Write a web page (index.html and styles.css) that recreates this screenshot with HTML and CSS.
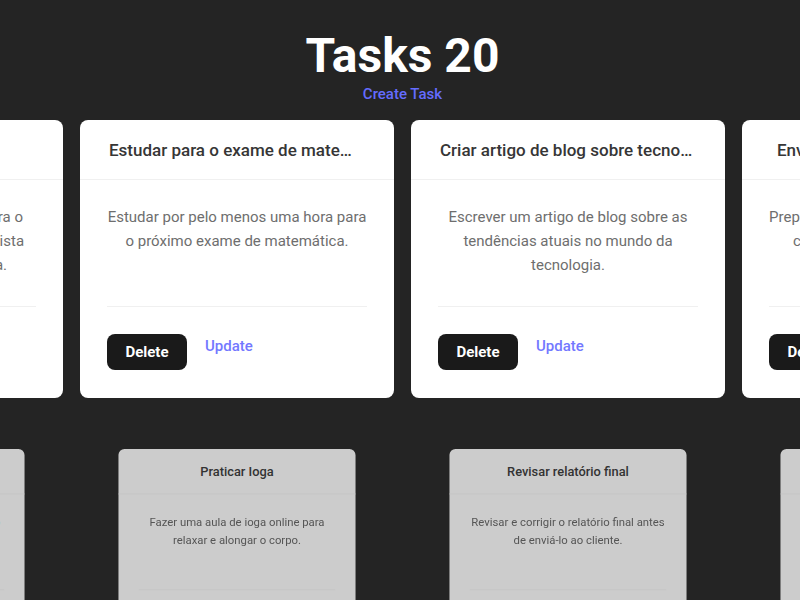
FILE: index.html
```html
<!DOCTYPE html>
<html lang="pt">
<head>
<meta charset="utf-8">
<title>Tasks</title>
<link rel="stylesheet" href="styles.css">
</head>
<body>
<main class="page">
  <header class="hero">
    <h1 class="hero-title">Tasks 20</h1>
    <a class="create-link" href="#">Create Task</a>
  </header>
  <section class="viewport">
    <div class="track">
      <article class="card">
        <div class="card-head"><span class="card-title">Fazer compras</span></div>
        <div class="card-body">
          <p class="card-desc">Ir ao mercado comprar itens para o jantar de domingo, conforme a lista elaborada junto com a família.</p>
          <div class="card-actions">
            <button class="btn-delete">Delete</button>
            <a class="link-update" href="#">Update</a>
          </div>
        </div>
      </article>
      <article class="card">
        <div class="card-head"><span class="card-title">Estudar para o exame de matemática</span></div>
        <div class="card-body">
          <p class="card-desc">Estudar por pelo menos uma hora para o próximo exame de matemática.</p>
          <div class="card-actions">
            <button class="btn-delete">Delete</button>
            <a class="link-update" href="#">Update</a>
          </div>
        </div>
      </article>
      <article class="card">
        <div class="card-head"><span class="card-title">Criar artigo de blog sobre tecnologia</span></div>
        <div class="card-body">
          <p class="card-desc">Escrever um artigo de blog sobre as tendências atuais no mundo da tecnologia.</p>
          <div class="card-actions">
            <button class="btn-delete">Delete</button>
            <a class="link-update" href="#">Update</a>
          </div>
        </div>
      </article>
      <article class="card">
        <div class="card-head"><span class="card-title">Enviar relatório mensal ao chefe</span></div>
        <div class="card-body">
          <p class="card-desc">Preparar e enviar os relatórios mensais com os resultados das equipes.</p>
          <div class="card-actions">
            <button class="btn-delete">Delete</button>
            <a class="link-update" href="#">Update</a>
          </div>
        </div>
      </article>

      <article class="card card-dim">
        <div class="card-head"><span class="card-title">Ligar para o dentista</span></div>
        <div class="card-body">
          <p class="card-desc">Marcar uma consulta de rotina com o dentista.</p>
          <div class="card-actions">
            <button class="btn-delete">Delete</button>
            <a class="link-update" href="#">Update</a>
          </div>
        </div>
      </article>
      <article class="card card-dim">
        <div class="card-head"><span class="card-title">Praticar Ioga</span></div>
        <div class="card-body">
          <p class="card-desc">Fazer uma aula de ioga online para relaxar e alongar o corpo.</p>
          <div class="card-actions">
            <button class="btn-delete">Delete</button>
            <a class="link-update" href="#">Update</a>
          </div>
        </div>
      </article>
      <article class="card card-dim">
        <div class="card-head"><span class="card-title">Revisar relatório final</span></div>
        <div class="card-body">
          <p class="card-desc">Revisar e corrigir o relatório final antes de enviá-lo ao cliente.</p>
          <div class="card-actions">
            <button class="btn-delete">Delete</button>
            <a class="link-update" href="#">Update</a>
          </div>
        </div>
      </article>
      <article class="card card-dim">
        <div class="card-head"><span class="card-title">Organizar a garagem</span></div>
        <div class="card-body">
          <p class="card-desc">Separar e doar os itens que não são mais usados.</p>
          <div class="card-actions">
            <button class="btn-delete">Delete</button>
            <a class="link-update" href="#">Update</a>
          </div>
        </div>
      </article>
    </div>
  </section>
</main>
</body>
</html>
```

FILE: styles.css
```css
* { box-sizing: border-box; }

html, body {
  margin: 0;
  height: 100%;
}

body {
  background: #242424;
  font-family: Roboto, "Liberation Sans", sans-serif;
  overflow: hidden;
}

.page {
  display: flex;
  flex-direction: column;
}

.hero {
  display: flex;
  flex-direction: column;
  align-items: center;
  padding: 28px 0 16px 5px;
}

.hero-title {
  margin: 0;
  font-size: 48px;
  line-height: 56px;
  font-weight: 700;
  color: #ffffff;
}

.create-link {
  display: block;
  font-size: 15px;
  line-height: 20px;
  font-weight: 500;
  color: #646cff;
  text-decoration: none;
}

.viewport {
  overflow: hidden;
}

.track {
  display: grid;
  grid-template-columns: repeat(4, 314px);
  gap: 17px;
  transform: translateX(-251px);
  width: max-content;
}

.card {
  height: 278px;
  background: #ffffff;
  border-radius: 8px;
  display: flex;
  flex-direction: column;
}

.card-head {
  height: 60px;
  padding: 0 29px;
  border-bottom: 1px solid #f0f0f0;
  display: flex;
  align-items: center;
  justify-content: center;
}

.card-title {
  font-size: 17px;
  font-weight: 500;
  color: #363636;
  white-space: nowrap;
  overflow: hidden;
  text-overflow: ellipsis;
}

.card-body {
  padding: 25px 27px 28px;
  display: flex;
  flex-direction: column;
}

.card-desc {
  margin: 0;
  height: 72px;
  font-size: 15px;
  line-height: 24px;
  color: #6e6e6e;
  text-align: center;
}

.card-actions {
  margin-top: 29px;
  padding-top: 27px;
  border-top: 1px solid #f0f0f0;
  display: flex;
  align-items: flex-start;
  gap: 18px;
}

.btn-delete {
  width: 80px;
  height: 36px;
  border: 0;
  border-radius: 8px;
  background: #1a1a1a;
  color: #ffffff;
  font-family: inherit;
  font-size: 15px;
  font-weight: 700;
  padding: 0;
}

.link-update {
  font-size: 15px;
  line-height: 24px;
  font-weight: 500;
  color: #7378ff;
  text-decoration: none;
}

.card-dim {
  background: #cccccc;
  transform: scale(0.755);
}

.card-dim .card-head {
  border-bottom-color: #c4c4c4;
}

.card-dim .card-actions {
  border-top-color: #c4c4c4;
}

.card-dim .card-title {
  color: #333333;
}

.card-dim .card-desc {
  color: #555555;
}
```
